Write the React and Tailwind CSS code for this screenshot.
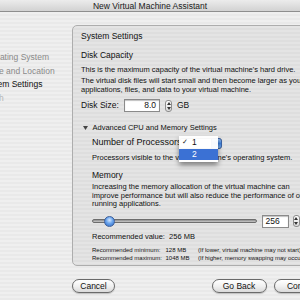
const Stepper = ({ className = '' }) => (
  <div className={`flex flex-col items-center justify-center gap-[2px] rounded-[3px] border border-[#8c8c8c] bg-gradient-to-b from-[#ffffff] to-[#dcdcdc] ${className}`}>
    <svg width="4" height="3" viewBox="0 0 4 3"><path d="M2 0 L4 3 L0 3 Z" fill="#333" /></svg>
    <svg width="4" height="3" viewBox="0 0 4 3"><path d="M0 0 L4 0 L2 3 Z" fill="#333" /></svg>
  </div>
);

const Sidebar = () => {
  const steps = [
    { label: 'Operating System', tone: 'text-[#8a8a8a]' },
    { label: 'Name and Location', tone: 'text-[#8a8a8a]' },
    { label: 'System Settings', tone: 'text-[#111]' },
    { label: 'Finish', tone: 'text-[#b5b5b5]' },
  ];
  return (
    <div className="w-[72px] shrink-0 pt-[39px]">
      {steps.map((s) => (
        <div key={s.label} className={`ml-[-19px] whitespace-nowrap text-[8.5px] leading-[13.5px] ${s.tone}`}>
          {s.label}
        </div>
      ))}
    </div>
  );
};

const Panel = () => (
  <div className="w-[250px] h-[241px] shrink-0 mt-[13px] rounded-[5px] border border-[#adadad] bg-[repeating-linear-gradient(180deg,#e4e4e4_0px,#e4e4e4_2px,#dedede_2px,#dedede_4px)] pl-[8px] pt-[5px] whitespace-nowrap">
    <div className="text-[8.5px] leading-[10px]">System Settings</div>
    <div className="mt-[8.5px] text-[8.5px] leading-[10px]">Disk Capacity</div>
    <p className="mt-[5px] text-[7.5px] leading-[9px]">This is the maximum capacity of the virtual machine's hard drive.</p>
    <p className="mt-[2px] text-[7.5px] leading-[9px]">
      The virtual disk files will start small and then become larger as you add
      <br />
      applications, files, and data to your virtual machine.
    </p>

    <div className="mt-[5.5px] h-[13px] flex items-center">
      <span className="w-[43px] text-[8.5px]">Disk Size:</span>
      <div className="w-[36px] h-[13px] border border-[#8a8a8a] bg-white shadow-[inset_0_1px_1px_rgba(0,0,0,0.25)] text-right pr-[3px] text-[8.5px] leading-[11px]">8.0</div>
      <Stepper className="ml-[5px] w-[7px] h-[12px]" />
      <span className="ml-[5px] text-[8.5px]">GB</span>
    </div>

    <div className="mt-[11px] h-[10px] flex items-center">
      <svg className="ml-[2px]" width="5" height="4" viewBox="0 0 5 4"><path d="M0 0 L5 0 L2.5 4 Z" fill="#444" /></svg>
      <span className="ml-[4.5px] text-[7.5px]">Advanced CPU and Memory Settings</span>
    </div>

    <div className="pl-[11px]">
      <div className="mt-[5px] h-[10px] flex items-center">
        <span className="w-[87px] text-[9px]">Number of Processors</span>
        <div className="relative w-[43px] h-[11px]">
          <div className="absolute inset-0 rounded-[3px] border border-[#7a7a7a] bg-white" />
          <div className="absolute right-0 top-0 w-[11px] h-[11px] rounded-r-[3px] bg-gradient-to-b from-[#9cc3f2] via-[#3d82e0] to-[#7fb2ef] border border-[#3a64a8]" />
          <div className="absolute left-0 top-[-2px] w-[39px] pt-[1px] pb-[2px] bg-white/95 shadow-[0_3px_5px_rgba(0,0,0,0.45)] text-[8.5px]">
            <div className="h-[12px] flex items-center">
              <span className="w-[13px] pl-[3px] text-[#222] font-['DejaVu_Sans',sans-serif] text-[7px]">✓</span>
              <span>1</span>
            </div>
            <div className="h-[11.5px] flex items-center bg-[#3b71d4] text-white">
              <span className="w-[13px]" />
              <span>2</span>
            </div>
          </div>
        </div>
      </div>
      <p className="mt-[4.5px] text-[7.5px] leading-[9px]">Processors visible to the virtual machine's operating system.</p>

      <div className="mt-[8px] text-[8.5px] leading-[10px]">Memory</div>
      <p className="mt-[3.75px] text-[7.5px] leading-[8.5px]">
        Increasing the memory allocation of the virtual machine can
        <br />
        improve performance but will also reduce the performance of other
        <br />
        running applications.
      </p>

      <div className="mt-[5.75px] h-[13px] flex items-center">
        <div className="relative w-[165px] h-[4px] rounded-full border border-[#6d6d6d] bg-gradient-to-b from-[#8d8d8d] to-[#c9c9c9]">
          <div className="absolute left-[11px] top-[-4.5px] w-[11px] h-[11px] rounded-full border border-[#3d5f9a] bg-[radial-gradient(circle_at_50%_35%,#d6e8ff_0%,#6aa4ec_45%,#2d68c4_100%)]" />
        </div>
        <div className="ml-[4.5px] w-[27px] h-[13px] border border-[#8a8a8a] bg-white shadow-[inset_0_1px_1px_rgba(0,0,0,0.25)] pl-[3px] text-[8.5px] leading-[11px]">256</div>
        <Stepper className="ml-[4px] w-[7px] h-[12px]" />
      </div>

      <div className="mt-[4.5px] text-[7.5px] leading-[10px]">Recommended value:&nbsp; 256 MB</div>
      <div className="mt-[3.75px] text-[6px] leading-[8.5px]">
        <div className="flex">
          <span className="w-[73.5px]">Recommended minimum:</span>
          <span className="w-[32.5px]">128 MB</span>
          <span>(If lower, virtual machine may not start)</span>
        </div>
        <div className="flex">
          <span className="w-[73.5px]">Recommended maximum:</span>
          <span className="w-[32.5px]">1048 MB</span>
          <span>(If higher, memory swapping may occur)</span>
        </div>
      </div>
    </div>
  </div>
);

const Button = ({ children, className = '' }) => (
  <div className={`h-[14px] shrink-0 rounded-full border border-[#6a6a6a] bg-gradient-to-b from-[#ffffff] via-[#f1f1f1] to-[#dadada] shadow-[0_1px_1px_rgba(0,0,0,0.2)] text-center text-[8.5px] leading-[12px] text-[#111] ${className}`}>
    {children}
  </div>
);

export default function App() {
  return (
    <div className="w-[300px] h-[300px] overflow-hidden flex flex-col font-['Liberation_Sans',Arial,sans-serif] text-[#111] bg-[repeating-linear-gradient(180deg,#efefef_0px,#efefef_2px,#e9e9e9_2px,#e9e9e9_4px)]">
      <div className="h-[12px] shrink-0 border-b border-[#8e8e8e] bg-gradient-to-b from-[#ececec] to-[#d2d2d2] text-center text-[8.5px] leading-[12px] text-[#1a1a1a]">
        New Virtual Machine Assistant
      </div>
      <div className="flex shrink-0">
        <Sidebar />
        <Panel />
      </div>
      <div className="mt-[13px] flex pl-[72px]">
        <Button className="w-[43px]">Cancel</Button>
        <Button className="ml-[96.5px] w-[55px]">Go Back</Button>
        <Button className="ml-[7.5px] w-[60px]">Continue</Button>
      </div>
    </div>
  );
}
